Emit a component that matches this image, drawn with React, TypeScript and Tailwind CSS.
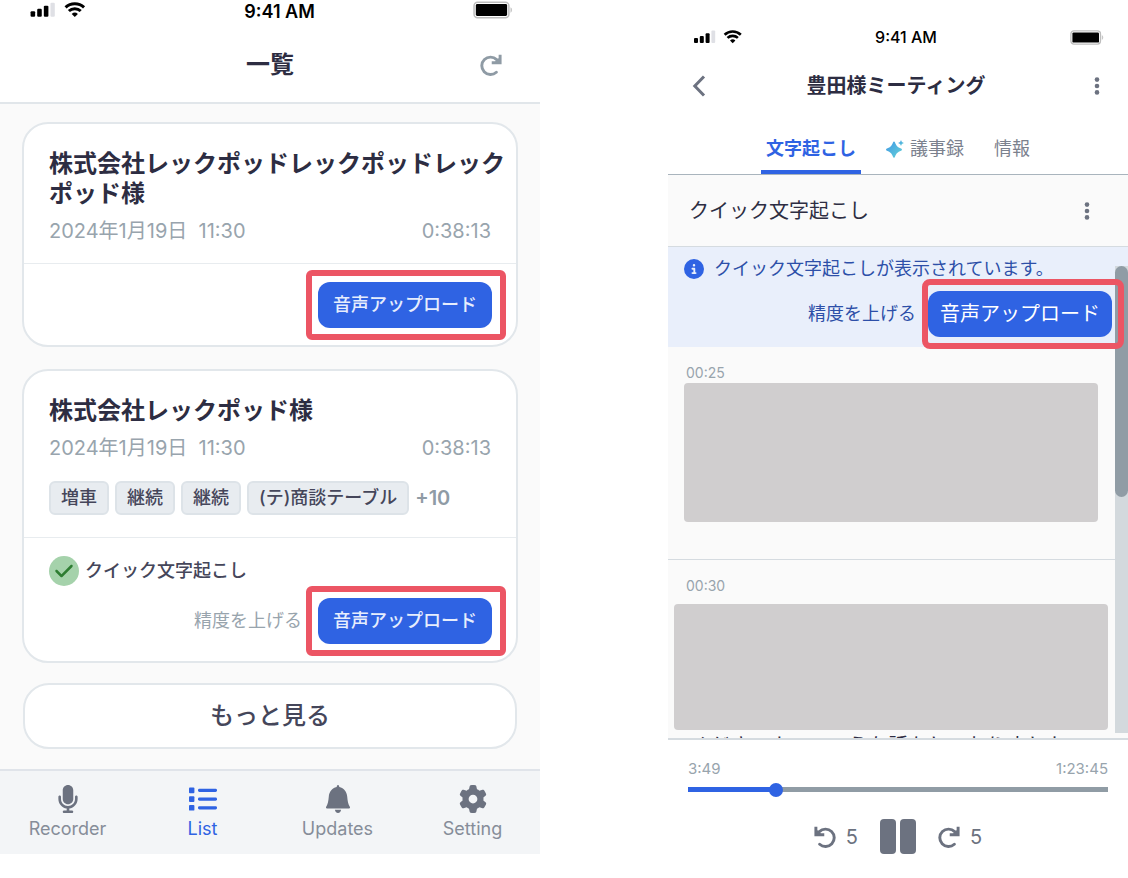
import React, { useState } from "react";
import { FaCheck, FaCircleInfo, FaGear, FaMicrophone } from "react-icons/fa6";

function SignalWifi({ className }: { className: string }) {
  return (
    <svg viewBox="0 0 48 14" className={className} aria-hidden="true">
      <rect x="0" y="8" width="4" height="5" rx="1" />
      <rect x="5.8" y="6" width="4" height="7" rx="1" />
      <rect x="11.6" y="3.2" width="4" height="9.8" rx="1" />
      <rect x="17.4" y="0.6" width="3.8" height="12.4" rx="1" fill="#dfe0e5" />
      <g fill="none" stroke="currentColor" strokeWidth="2.6">
        <path d="M30.6 4.7a11.7 11.7 0 0 1 16.2 0" />
        <path d="M33.5 7.9a7.6 7.6 0 0 1 10.4 0" />
      </g>
      <path d="M38.7 13.2l-2.7-2.8a4 4 0 0 1 5.4 0z" />
    </svg>
  );
}

function Battery({ className }: { className: string }) {
  return (
    <svg viewBox="0 0 34 15" className={className} aria-hidden="true">
      <rect x="0.9" y="0.9" width="29.6" height="13.2" rx="3" fill="#fff" stroke="#bdbdbd" strokeWidth="1.3" />
      <rect x="2.4" y="2.4" width="26.6" height="10.2" rx="1.2" />
      <path d="M31.8 5.2c1.9.5 1.9 4.1 0 4.6z" fill="#c8c8c8" />
    </svg>
  );
}

function RotateIcon({ className }: { className: string }) {
  return (
    <svg viewBox="0 0 21 21" className={className} fill="none" stroke="currentColor" strokeWidth="2.8" aria-hidden="true">
      <path d="M15.9 5.4A8.3 8.3 0 1 0 15.6 17.4" strokeLinecap="round" />
      <path d="M19.2 0.6V8.4H11.2" />
      <path d="M19.2 2.6l-5.8 5.8h5.8z" fill="currentColor" stroke="none" />
    </svg>
  );
}

function BellIcon({ className }: { className: string }) {
  return (
    <svg viewBox="0 0 24 28" className={className} fill="currentColor" aria-hidden="true">
      <path d="M12 0c.8 0 1.2.9 1.3 2.1 4.800 1.100 7.500 4.900 7.900 9.400.4 4.700 1 7.600 2.600 10.200.5.9.2 1.700-.8 1.700H1c-1 0-1.300-.8-.8-1.700 1.600-2.600 2.200-5.500 2.600-10.200.4-4.500 3.100-8.300 7.900-9.400C10.800.9 11.200 0 12 0z" />
      <path d="M8.900 24.700h6.200c-.2 1.900-1.400 3.200-3.100 3.200s-2.900-1.300-3.100-3.200z" />
    </svg>
  );
}

function ListIcon({ className }: { className: string }) {
  return (
    <svg viewBox="0 0 28 28" className={className} fill="currentColor" aria-hidden="true">
      {[2.6, 11.3, 20].map((y) => (
        <g key={y}>
          <rect x="0" y={y} width="5.400" height="5.600" rx="0.900" />
          <rect x="9" y={y + 1.2} width="19" height="3.200" rx="1.400" />
        </g>
      ))}
    </svg>
  );
}

function DotsIcon() {
  return (
    <svg viewBox="0 0 6 18" className="h-[18px] w-1.5" fill="currentColor" aria-hidden="true">
      <circle cx="3" cy="2.600" r="2.300" />
      <circle cx="3" cy="9" r="2.300" />
      <circle cx="3" cy="15.400" r="2.300" />
    </svg>
  );
}

function SparkleIcon() {
  return (
    <svg viewBox="0 0 18 18" className="h-[18px] w-[18px]" aria-hidden="true">
      <defs>
        <linearGradient id="sparkle" x1="0" y1="0" x2="1" y2="1">
          <stop offset="0" stopColor="#3f97e6" />
          <stop offset="1" stopColor="#66d3d6" />
        </linearGradient>
      </defs>
      <g fill="url(#sparkle)">
        <path d="M8 1.400c.4 0 .7.4.9.9 1.400 3.600 2.600 4.900 6.200 6.300 1.200.5 1.200 1.700 0 2.200-3.600 1.400-4.800 2.700-6.200 6.300-.4 1.100-1.400 1.100-1.800 0-1.400-3.600-2.600-4.900-6.200-6.300-1.200-.5-1.200-1.700 0-2.200 3.600-1.400 4.800-2.700 6.200-6.300.2-.5.5-.9.9-.9z" />
        <path d="M15 0c.7 1.900 1.100 2.300 3 3-1.900.7-2.300 1.100-3 3-.7-1.900-1.100-2.300-3-3 1.900-.7 2.300-1.100 3-3z" />
      </g>
    </svg>
  );
}

function Meta() {
  return (
    <div className="mt-2 flex justify-between pr-[25px] text-xl leading-7 text-[#98a4ad]">
      <span className="whitespace-pre">2024年1月19日&nbsp; 11:30</span>
      <span>0:38:13</span>
    </div>
  );
}

function CardUpload() {
  return (
    <div className="relative mr-6">
      <button type="button" className="block h-[46px] rounded-xl bg-[#2f63e3] px-[15px] text-lg font-medium text-[#e6edfd]">
        音声アップロード
      </button>
      <span className="pointer-events-none absolute -inset-y-3 -right-3.5 -left-3 rounded-md border-6 border-[#ec5564]" />
    </div>
  );
}

function NavItem({ icon, label, active }: { icon: React.ReactNode; label: string; active?: boolean }) {
  return (
    <a
      href="#"
      className={
        active
          ? "flex flex-col items-center gap-1 text-[#2f63e3]"
          : "flex flex-col items-center gap-1 text-[#6c7280]"
      }
    >
      {icon}
      <span className={active ? "text-lg leading-6" : "text-lg leading-6 text-[#868d99]"}>{label}</span>
    </a>
  );
}

function ListScreen() {
  const tags = ["増車", "継続", "継続", "(テ)商談テーブル"];
  return (
    <section className="min-w-0 flex-[540]">
      <header className="border-b-2 border-[#e1e6ea]">
        <div className="flex h-6 items-start justify-between pr-[27px] pl-[30px]">
          <SignalWifi className="mt-0.5 h-4 w-14" />
          <span className="text-lg leading-6 font-semibold">9:41 AM</span>
          <Battery className="mt-px h-[18px] w-10" />
        </div>
        <div className="grid h-[78px] grid-cols-[1fr_auto_1fr] items-center px-[38px] pt-1">
          <h1 className="col-start-2 text-2xl font-bold text-[#2d2d42]">一覧</h1>
          <button type="button" aria-label="更新" className="justify-self-end text-[#8f9ba5]">
            <RotateIcon className="h-[22px] w-[22px]" />
          </button>
        </div>
      </header>

      <main className="flex flex-col bg-[#fafafa] px-[22px] pt-[18px] pb-5 text-[#2d2d42]">
        <article className="rounded-[26px] border-2 border-[#e2e7eb] bg-white">
          <div className="pt-[25px] pb-[18px] pl-[25px]">
            <h2 className="pr-2 text-2xl leading-[30px] font-bold">株式会社レックポッドレックポッドレックポッド様</h2>
            <Meta />
          </div>
          <div className="flex justify-end border-t border-[#e8ecef] pt-[18px] pb-[17px]">
            <CardUpload />
          </div>
        </article>

        <article className="mt-[22px] rounded-[26px] border-2 border-[#e2e7eb] bg-white">
          <div className="pt-[25px] pb-[22px] pl-[25px]">
            <h2 className="pr-2 text-2xl leading-[30px] font-bold">株式会社レックポッド様</h2>
            <Meta />
            <ul className="mt-[19px] flex items-center gap-1.5">
              {tags.map((tag, i) => (
                <li
                  key={i}
                  className="flex h-[34px] items-center rounded-md border-2 border-[#dde3e8] bg-[#e8ecf0] px-2.5 text-lg font-medium whitespace-nowrap text-[#45465a]"
                >
                  {tag}
                </li>
              ))}
              <li className="text-xl font-semibold text-[#8f9ba5]">+10</li>
            </ul>
          </div>
          <div className="border-t border-[#e8ecef] pt-[18px] pb-[17px] pl-[25px]">
            <div className="flex items-center gap-1.5 text-lg leading-[30px] font-medium text-[#45465a]">
              <span className="flex h-[30px] w-[30px] items-center justify-center rounded-full bg-[#a5d2ab] text-[#2e7d32]">
                <FaCheck className="h-5 w-5" />
              </span>
              クイック文字起こし
            </div>
            <div className="mt-3 flex items-center justify-end">
              <span className="mr-4 text-lg text-[#98a4ad]">精度を上げる</span>
              <CardUpload />
            </div>
          </div>
        </article>

        <button
          type="button"
          className="mx-px mt-5 h-[66px] rounded-[26px] border-2 border-[#e2e7eb] bg-white text-2xl font-medium text-[#45465a]"
        >
          もっと見る
        </button>
      </main>

      <nav className="grid grid-cols-4 border-t-2 border-[#e0e4ea] bg-[#f3f5f7] pt-3.5 pb-[13px]">
        <NavItem icon={<FaMicrophone className="h-7 w-7" />} label="Recorder" />
        <NavItem icon={<ListIcon className="h-7 w-7" />} label="List" active />
        <NavItem icon={<BellIcon className="h-7 w-6" />} label="Updates" />
        <NavItem icon={<FaGear className="h-7 w-7" />} label="Setting" />
      </nav>
    </section>
  );
}

function Player() {
  const [value, setValue] = useState(20);
  const fill = `calc(7px + (100% - 14px) * ${value / 100})`;
  return (
    <footer className="border-t-2 border-[#d5dbe0] px-5 pt-[18px] pb-[22px]">
      <div className="flex justify-between text-[15px] leading-[22px] text-[#98a4ad]">
        <span>3:49</span>
        <span>1:23:45</span>
      </div>
      <input
        type="range"
        aria-label="再生位置"
        value={value}
        onChange={(e) => setValue(Number(e.target.value))}
        style={{
          backgroundImage: `linear-gradient(to right, #2f63e3 ${fill}, #909ca5 ${fill})`,
        }}
        className="my-[7px] block h-[5px] w-full appearance-none [&::-webkit-slider-thumb]:h-3.5 [&::-webkit-slider-thumb]:w-3.5 [&::-webkit-slider-thumb]:appearance-none [&::-webkit-slider-thumb]:rounded-full [&::-webkit-slider-thumb]:bg-[#2f63e3]"
      />
      <div className="mt-[27px] flex items-center justify-center gap-[22px] text-xl text-[#6c7280]">
        <button type="button" aria-label="5秒戻る" className="flex items-center gap-2.5">
          <RotateIcon className="h-[22px] w-[22px] -scale-x-100" />5
        </button>
        <button type="button" aria-label="一時停止" className="flex gap-1">
          <span className="h-[35px] w-4 rounded bg-[#6c7280]" />
          <span className="h-[35px] w-4 rounded bg-[#6c7280]" />
        </button>
        <button type="button" aria-label="5秒進む" className="flex items-center gap-2.5">
          <RotateIcon className="h-[22px] w-[22px]" />5
        </button>
      </div>
    </footer>
  );
}

function DetailScreen() {
  return (
    <section className="min-w-0 flex-[460]">
      <header className="pt-[25px]">
        <div className="flex h-6 items-center justify-between pr-6 pl-[26px]">
          <SignalWifi className="h-3.5 w-12" />
          <span className="text-base font-medium">9:41 AM</span>
          <Battery className="h-[15px] w-[34px]" />
        </div>
        <div className="mt-[21px] grid h-8 grid-cols-[1fr_auto_1fr] items-center pr-7 pl-6 text-[#6c7280]">
          <a href="#" aria-label="戻る" className="justify-self-start">
            <svg viewBox="0 0 14 22" className="h-[22px] w-3.5" fill="none" stroke="currentColor" strokeWidth="3" aria-hidden="true">
              <path d="M12 1.500L2.800 11l9.200 9.500" />
            </svg>
          </a>
          <h1 className="text-xl font-bold text-[#2d2d42]">豊田様ミーティング</h1>
          <button type="button" aria-label="メニュー" className="justify-self-end">
            <DotsIcon />
          </button>
        </div>
        <nav className="mt-[21px] flex items-stretch justify-center gap-5 border-b border-[#a9b4bd] text-lg text-[#7b818e]">
          <a href="#" className="h-[51px] border-b-4 border-[#2f63e3] px-[5px] pt-3 font-bold text-[#2f63e3]">
            文字起こし
          </a>
          <a href="#" className="flex items-start gap-1.5 px-[5px] pt-3">
            <span className="pt-[5px]">
              <SparkleIcon />
            </span>
            議事録
          </a>
          <a href="#" className="px-[5px] pt-3">
            情報
          </a>
        </nav>
      </header>

      <div className="flex h-[72px] items-center justify-between border-b border-[#d5dbe0] bg-[#fafafa] pr-[38px] pl-[21px] text-xl text-[#2d2d42]">
        <h2>クイック文字起こし</h2>
        <button type="button" aria-label="文字起こしメニュー" className="text-[#6c7280]">
          <DotsIcon />
        </button>
      </div>

      <main className="relative h-[491px] overflow-hidden bg-[#fafafa]">
        <div className="bg-[#e9effb] pt-2 pr-4 pb-2.5 pl-4 text-lg text-[#2d4fa8]">
          <p className="flex items-center gap-2.5 leading-7 whitespace-nowrap">
            <FaCircleInfo className="h-5 w-5 shrink-0 text-[#2f63e3]" />
            クイック文字起こしが表示されています。
          </p>
          <div className="mt-2 flex items-center justify-end gap-3">
            <span className="whitespace-nowrap">精度を上げる</span>
            <div className="relative">
              <button type="button" className="block h-[46px] rounded-xl bg-[#2f63e3] px-3 text-xl whitespace-nowrap text-white">
                音声アップロード
              </button>
              <span className="pointer-events-none absolute -inset-y-3 -right-3 -left-1.5 z-10 rounded-lg border-6 border-[#ec5564]" />
            </div>
          </div>
        </div>
        <article className="mr-[13px] h-[213px] border-b border-[#d5dbe0] pt-4 pr-[17px] pl-4">
          <time className="block pl-0.5 text-sm leading-5 text-[#98a4ad]">00:25</time>
          <div className="h-[139px] rounded bg-[#d0cecf]" />
        </article>
        <article className="mr-[13px] pt-4 pr-[7px] pl-1.5">
          <time className="block pl-3 text-sm leading-5 text-[#98a4ad]">00:30</time>
          <div className="mt-2 h-[126px] rounded bg-[#d0cecf]" />
          <p className="pl-4 text-xl leading-8 whitespace-nowrap text-[#2d2d42]">くださいよっていうな話をしておりました</p>
        </article>
        <div className="absolute top-[19px] right-0 bottom-[5px] w-[13px] bg-[#d3d9dd]">
          <div className="h-[231px] rounded-full bg-[#909ca5]" />
        </div>
      </main>

      <Player />
    </section>
  );
}

export default function App() {
  return (
    <div className="flex min-h-screen items-start bg-white font-['Inter','Noto_Sans_CJK_JP',sans-serif] text-black">
      <ListScreen />
      <div className="w-32 shrink-0" />
      <DetailScreen />
    </div>
  );
}
